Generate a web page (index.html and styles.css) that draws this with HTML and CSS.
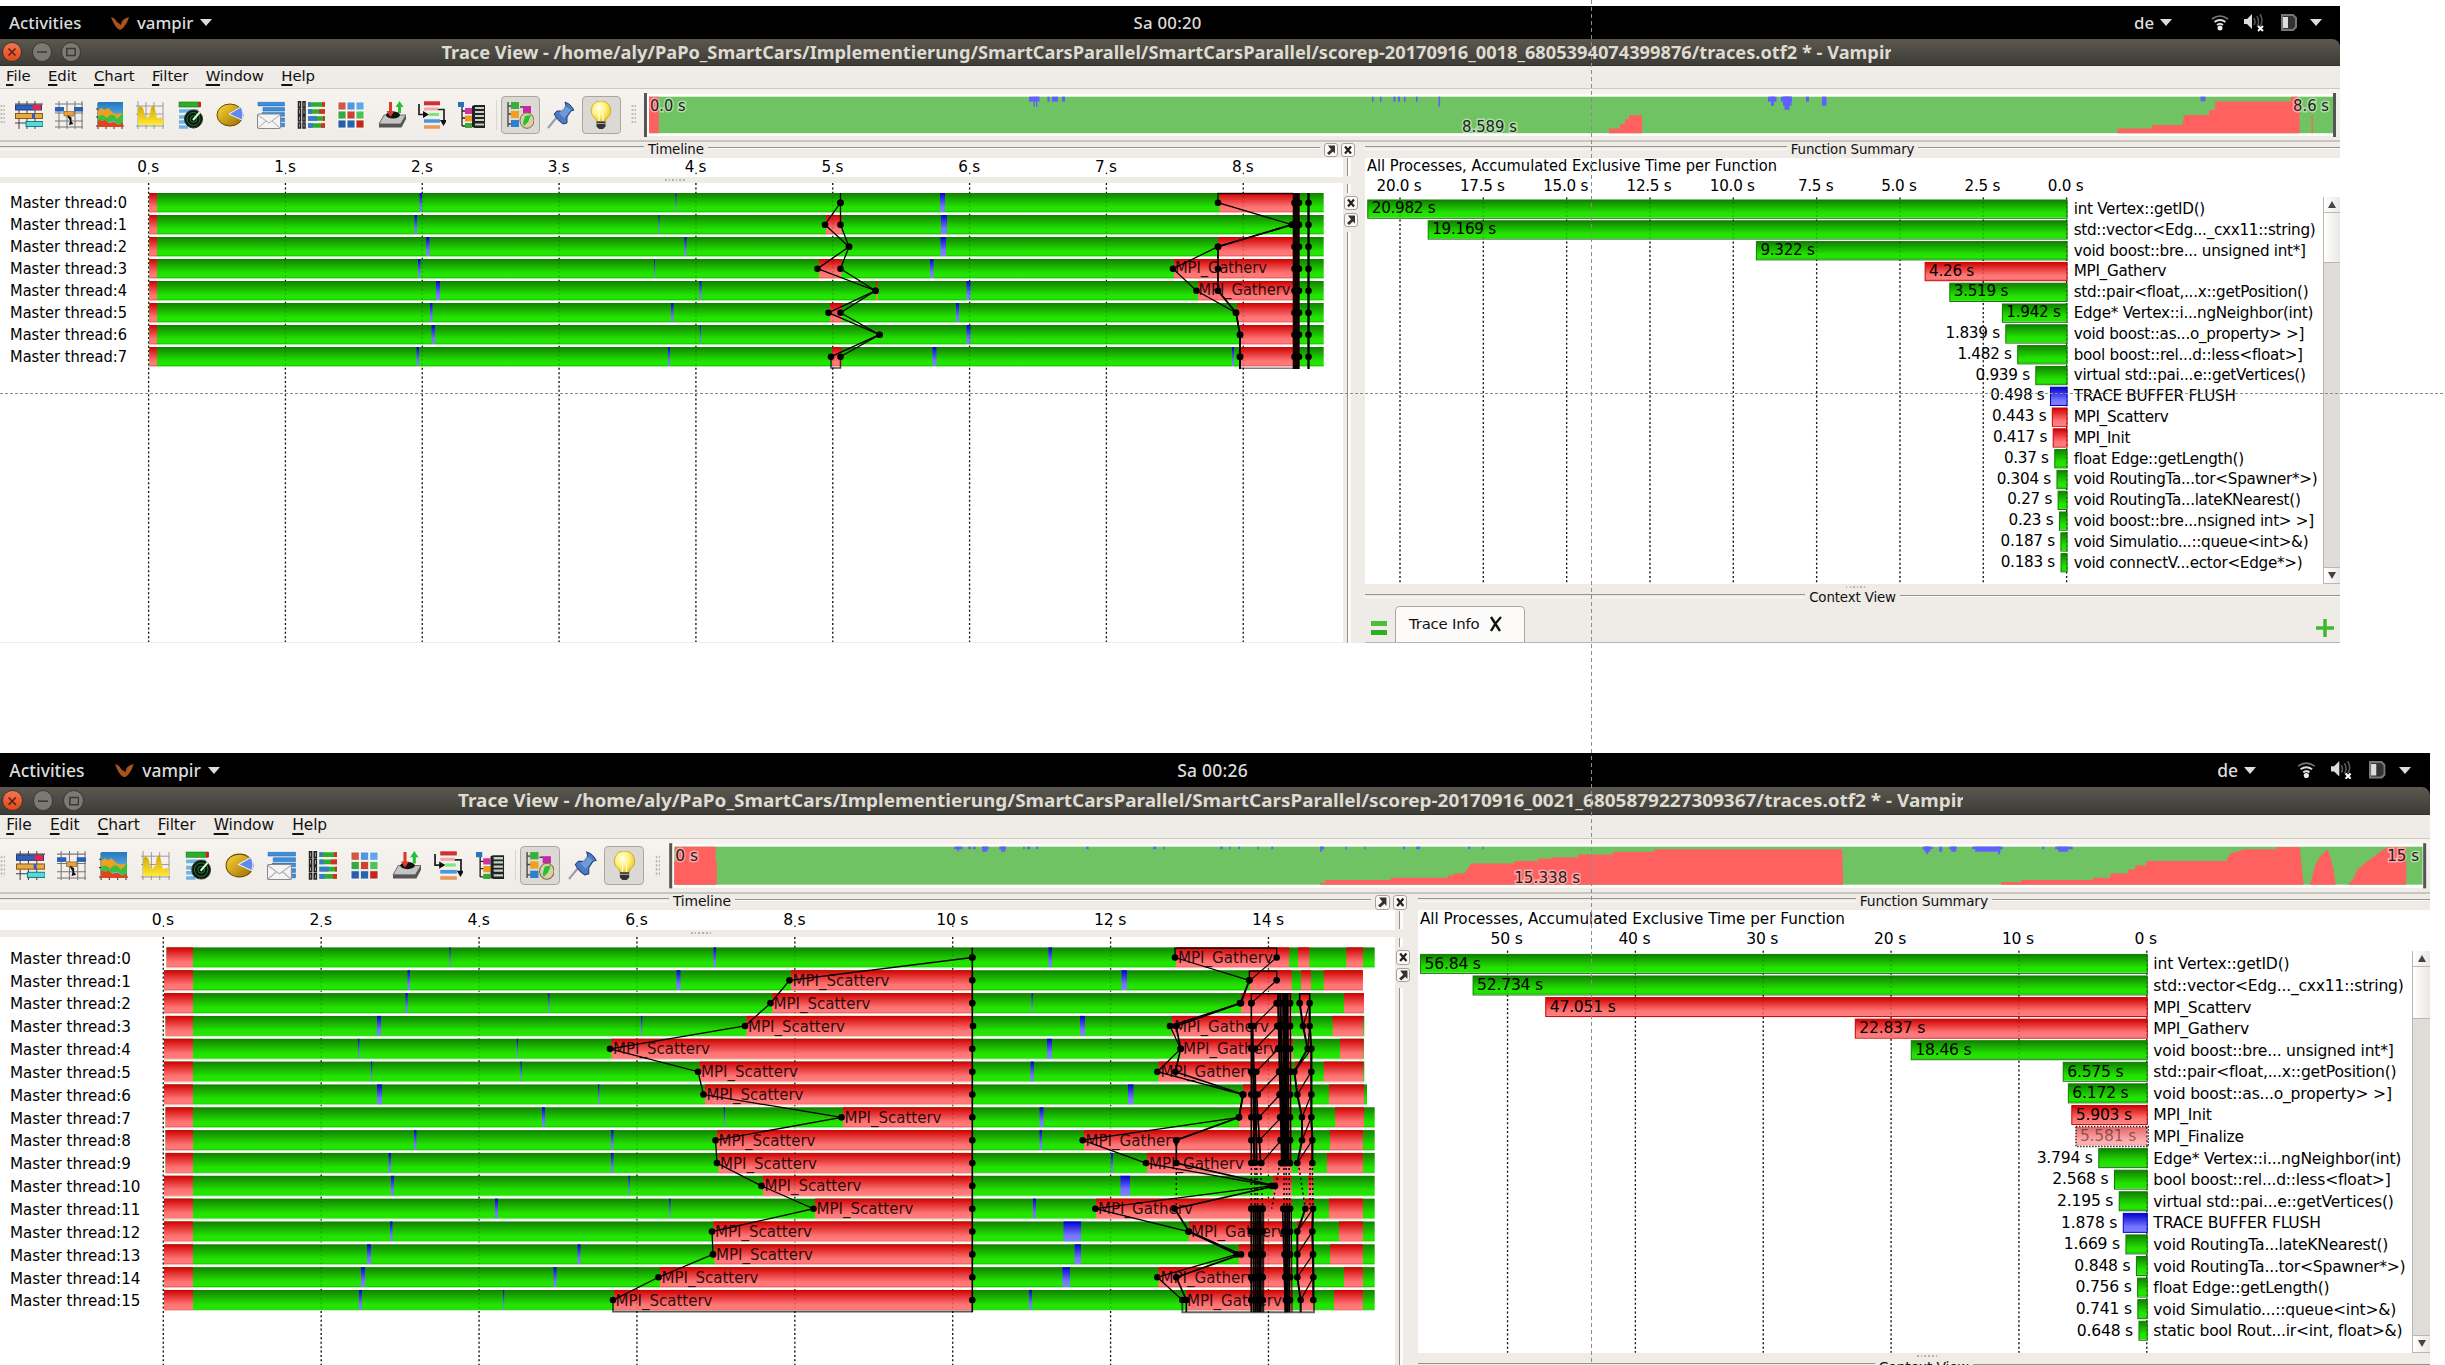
FILE: index.html
```html
<!DOCTYPE html>
<html lang="en">
<head>
<meta charset="utf-8">
<title>Trace View - Vampir</title>
<link rel="stylesheet" href="styles.css">
</head>
<body>
<svg class="defs" width="0" height="0" aria-hidden="true">
  <defs>
    <linearGradient id="g" x1="0" y1="0" x2="0" y2="1"><stop offset="0" stop-color="#118000"/><stop offset=".7" stop-color="#22e300"/><stop offset=".91" stop-color="#22e600"/><stop offset=".93" stop-color="#1cbf08"/><stop offset=".96" stop-color="#8cf080"/><stop offset="1" stop-color="#b4f5ac"/></linearGradient>
    <linearGradient id="r" x1="0" y1="0" x2="0" y2="1"><stop offset="0" stop-color="#cf0000"/><stop offset=".7" stop-color="#ff7474"/><stop offset=".91" stop-color="#ff7c7c"/><stop offset=".93" stop-color="#ef5c5c"/><stop offset=".96" stop-color="#ffb0b0"/><stop offset="1" stop-color="#ffc4c4"/></linearGradient>
    <linearGradient id="b" x1="0" y1="0" x2="0" y2="1"><stop offset="0" stop-color="#0000cf"/><stop offset=".7" stop-color="#7474ff"/><stop offset="1" stop-color="#8080ff"/></linearGradient>
    <linearGradient id="blueBar" x1="0" y1="0" x2="0" y2="1"><stop offset="0" stop-color="#7cc0f0"/><stop offset="1" stop-color="#1c5fae"/></linearGradient>
    <linearGradient id="sky" x1="0" y1="0" x2="0" y2="1"><stop offset="0" stop-color="#1f78c0"/><stop offset="1" stop-color="#8cc8f0"/></linearGradient>
    <linearGradient id="gold" x1="0" y1="0" x2="1" y2="1"><stop offset="0" stop-color="#ffd83c"/><stop offset="1" stop-color="#9a6a00"/></linearGradient>
    <linearGradient id="yel" x1="0" y1="0" x2="0" y2="1"><stop offset="0" stop-color="#d0a400"/><stop offset="1" stop-color="#ffe838"/></linearGradient>
    <radialGradient id="bulbFill" cx=".4" cy=".35" r=".7"><stop offset="0" stop-color="#fffff0"/><stop offset=".5" stop-color="#fff27a"/><stop offset="1" stop-color="#e8c020"/></radialGradient>

    <symbol id="i-timeline" viewBox="0 0 28 28"><path d="M4 0V28M12 0V28M20 0V28M0 3H28M0 13H28M0 22H28" stroke="#444" stroke-width="1"/><rect x=".5" y="4" width="26" height="5" fill="#2f5fc0" stroke="#23407c"/><rect x="18" y="4" width="8" height="5" fill="#f0204c"/><rect x=".5" y="12.500" width="27" height="5" fill="#e8a848" stroke="#8a5a10"/><rect x="17" y="12.500" width="3" height="5" fill="#2f5fc0"/><rect x="11" y="20.500" width="17" height="5" fill="#58d8dc" stroke="#148088"/></symbol>
    <symbol id="i-process" viewBox="0 0 28 28"><path d="M4 0V28M12 0V28M20 0V28M27 0V28M0 3H28M0 12H28M0 20H28M0 26H28" stroke="#777" stroke-width="1"/><rect x="0" y="6" width="9" height="4.500" fill="#2a60b8"/><rect x="19" y="6" width="9" height="4.500" fill="#2a60b8"/><rect x="9" y="10.500" width="10" height="4.500" fill="#e8a040" stroke="#8a5a10" stroke-width=".6"/><path d="M12.500 14l4 2.500v4l2 2.500-4.500 1 1-4.500-2-3z" fill="#111"/></symbol>
    <symbol id="i-area" viewBox="0 0 28 28"><path d="M2 2V28M0 25H28M0 8H3M0 16H3M10 25V28M18 25V28M26 25V28" stroke="#333"/><rect x="2" y="1" width="25" height="24" fill="url(#sky)"/><path d="M2 10l3-3 4 2 3-2 5 5 4 1 6-1v7H2z" fill="#f0a020"/><path d="M2 15l5-1 4 3 3-3 4 0 3 4 3-3 3-4v10l-4 3-5-4-5 1-5-2-6 2z" fill="#38c040"/><path d="M2 19l4 1 3-1 4 3 5-1 5 3 4-3v5H2z" fill="#e04418"/></symbol>
    <symbol id="i-counter" viewBox="0 0 28 28"><path d="M2 0V28M0 25H28M10 1V28M18 1V28M27 1V28M0 5H27M0 13H27" stroke="#888" stroke-width=".8"/><path d="M2 24V8l2-3 3 2 2 8 2 2 3-3 1-7 2-3 2 4 2 9 2 0 2-1 2 3V24z" fill="url(#yel)"/></symbol>
    <symbol id="i-radar" viewBox="0 0 28 28"><rect x="3" y="1" width="21" height="5" fill="#28b028" stroke="#186c18" stroke-width=".6"/><rect x="22" y="1" width="3" height="5" fill="#d02020"/><path d="M3 10H22M3 16H12M3 21H12M3 26H12" stroke="#6cb4e4" stroke-width="3.500"/><circle cx="17.500" cy="18" r="9" fill="#04180a" stroke="#333"/><g fill="none" stroke="#3e8a4c" stroke-width=".8"><circle cx="17.500" cy="18" r="6.500"/><circle cx="17.500" cy="18" r="3.300"/></g><path d="M17 19L24 11" stroke="#c8ffc8" stroke-width="2"/></symbol>
    <symbol id="i-pie" viewBox="0 0 28 28"><ellipse cx="14" cy="14" rx="13" ry="11" fill="url(#gold)" stroke="#6a4800"/><path d="M13 13L25 6q3 5 1 13z" fill="#5c8cf0" stroke="#eef" stroke-width="1"/></symbol>
    <symbol id="i-message" viewBox="0 0 28 28"><path d="M1 1.300h26.500v3.600H1zM6 6.500h21.500v3.600H6zM5 11.600h22.500v3.600H5zM20 17h7.500v3.600H20zM20 22.200h7.500v3.600H20z" fill="#3b8fdc" stroke="#1c5fae" stroke-width=".5"/><rect x=".5" y="13" width="23" height="14.500" rx="1" fill="#f4f4f4" stroke="#888"/><path d="M1 14l11 8 11-8M1 27l8-7M23 27l-8-7" fill="none" stroke="#aaa"/></symbol>
    <symbol id="i-comm" viewBox="0 0 28 28"><path fill="#fff" stroke="#222" stroke-width="1.500" d="M1.500.800h2v5.500h-2zM6 .800h2v5.500H6zM1.500 8h2v5.500h-2zM6 8h2v5.500H6zM1.500 15h2v5h-2zM6 15h2v5H6zM1.500 22h2v5h-2zM6 22h2v5H6z"/><path d="M11 3.500H28M11 10.500H28M11 17.500H28M11 24.500H28" stroke="#2cae2c" stroke-width="4.600"/><path d="M11 3.500h3M11 10.500h4M11 17.500h9M11 24.500h5" stroke="#3878d0" stroke-width="4.600"/><path d="M25 3.500h3M22 10.500h6M26 17.500h2M24 24.500h4" stroke="#d83020" stroke-width="4.600"/></symbol>
    <symbol id="i-matrix" viewBox="0 0 28 28"><g stroke="#fff" stroke-width=".8"><path d="M1 1h8v8H1z" fill="#d05848"/><path d="M10 1h8v8h-8z" fill="#5098d8"/><path d="M19 1h8v8h-8z" fill="#60a8e8"/><path d="M1 10h8v8H1z" fill="#38a840"/><path d="M10 10h8v8h-8z" fill="#d04030"/><path d="M19 10h8v8h-8z" fill="#50c058"/><path d="M1 19h8v8H1z" fill="#2c5ca8"/><path d="M10 19h8v8h-8z" fill="#2464b0"/><path d="M19 19h8v8h-8z" fill="#c02818"/></g></symbol>
    <symbol id="i-io" viewBox="0 0 28 28"><path d="M6 14H28L22.500 23H1z" fill="#c4c4c4" stroke="#555" stroke-width=".8"/><path d="M1 23H22.500l5.500-9v4l-4.500 8.500H1z" fill="#555"/><ellipse cx="15" cy="14" rx="7" ry="3.500" fill="#111"/><path d="M11 1v9H8.500l4 6 4-6H14V1z" fill="#d83a30"/><path d="M20 12V6h-2.500l4-6 4 6H23v6z" fill="#28c038"/></symbol>
    <symbol id="i-flow" viewBox="0 0 28 28"><path d="M6 2.300H22" stroke="#d03030" stroke-width="4"/><path d="M6 8H20" stroke="#f0a8a8" stroke-width="3"/><path d="M11 13.500H21" stroke="#78e878" stroke-width="3"/><path d="M6 20H22" stroke="#4898e0" stroke-width="3.500"/><path d="M6 26H22" stroke="#e89858" stroke-width="3.500"/><path d="M1 3V13.500H6M20 8.500H26V20" fill="none" stroke="#222" stroke-width="1.700"/><path d="M5 10l6 3.500-6 3.500zM22 19h7l-3.500 6z" fill="#111"/></symbol>
    <symbol id="i-tree" viewBox="0 0 28 28"><path d="M4 4V25M4 10h5M4 17h5M4 25h5" stroke="#222" stroke-width="1.300" fill="none"/><rect x="0" y="1" width="6" height="5" fill="#2870c0"/><rect x="7" y="7" width="7" height="6" fill="#d030a0"/><rect x="7" y="14.500" width="7" height="6" fill="#f09820"/><rect x="7" y="22" width="7" height="5" fill="#38a838"/><path d="M14 5l2.500-1H27v23H17l-3-1z" fill="#222"/><path d="M17 7H26M17 11H26M17 15H26M17 19H26M17 23.500H26" stroke="#c4d0c4" stroke-width="2.200"/></symbol>
    <symbol id="i-palette" viewBox="0 0 28 28"><path d="M2 1V26M2 5h5M2 13h5M2 23h5M14 6h4" stroke="#444" stroke-width="1.300"/><rect x="5" y="1" width="8" height="7" fill="#38b038"/><rect x="5" y="10" width="8" height="7" fill="#f0a020"/><rect x="5" y="19" width="8" height="7" fill="#2c80d0"/><rect x="17" y="5" width="8" height="7" fill="#c828a8"/><ellipse cx="21" cy="19.500" rx="7" ry="7.800" fill="#dccfa8" stroke="#776a48"/><path d="M17 22l2-7 6-1-3 7-4 4z" fill="#28c030"/></symbol>
    <symbol id="i-pin" viewBox="0 0 28 28"><path d="M1 27L10 16" stroke="#99a" stroke-width="2"/><path d="M18 1q5 1 9 8l-3 1-4 6 0 6-4 1q-6-4-9-10l3-3 6 0 3-5z" fill="#4c7cc0" stroke="#23437c"/><path d="M18 5L12 12l5 5 7-8z" fill="#89b0e4" opacity=".6"/></symbol>
    <symbol id="i-bulb" viewBox="0 0 28 28"><path d="M14 0a9.500 9.500 0 0 1 6 17l-2 4h-8l-2-4A9.500 9.500 0 0 1 14 0z" fill="url(#bulbFill)" stroke="#c8a020" stroke-width=".8"/><path d="M12 20v-8M16 20v-8" stroke="#fff" stroke-width="1"/><path d="M9.500 20.500h9v5l-2.500 2.500h-4l-2.500-2.500z" fill="#333"/><path d="M9.500 22.500h9" stroke="#aaa"/></symbol>
    <symbol id="i-vampir" viewBox="0 0 19 14"><path d="M0 1Q4 2 6 6q3 2 4 3 0-6 8-8-1 4-3 7-2 4-6 6-4-2-6-6Q1 4 0 1z" fill="#a8521c"/></symbol>
    <symbol id="i-wifi" viewBox="0 0 18 16"><g fill="none" stroke="#ddd" stroke-width="2"><path d="M1 4Q9-2 17 4" stroke="#777" stroke-width="1.600"/><path d="M3.500 7Q9 3 14.500 7"/><path d="M6 10Q9 7.500 12 10"/></g><circle cx="9" cy="13" r="2.500" fill="#eee"/></symbol>
    <symbol id="i-volume" viewBox="0 0 20 18"><path d="M0 5h3l5-5v15l-5-5H0z" fill="#ddd"/><g fill="none" stroke="#555" stroke-width="1.600"><path d="M10 4q2 4 0 7M13 2q3 6 0 10M16 0q4 7 0 12"/></g><path d="M14 12l5 5M19 12l-5 5" stroke="#fff" stroke-width="2"/></symbol>
    <symbol id="i-battery" viewBox="0 0 16 17"><path d="M1 1h11l3 3v9l-3 3H1z" fill="#333" stroke="#777" stroke-width="2"/><path d="M2 3h5v11H2z" fill="#ddd"/></symbol>
  </defs>
</svg>
<main class="page" id="page"></main>
<div class="guide guide-v"></div>
<div class="guide guide-h"></div>
<script src="app.js"></script>
</body>
</html>
```
FILE: styles.css
```css
* { box-sizing: border-box; }
body { margin: 0; background: #fff; overflow: hidden; height: 1365px; position: relative; font-family: "DejaVu Sans", sans-serif; color: #111; }
.defs { position: absolute; }
.page { display: flex; flex-direction: column; gap: 110.500px; padding-top: 6px; align-items: flex-start; height: 1365px; overflow: hidden; }
.page svg { display: block; }

.window { width: 2340px; height: 636.500px; flex: none; display: flex; flex-direction: column; background: #efebe7; font-size: 14.900px; overflow: hidden; }
.window.large { zoom: 1.0385; }

.topbar { height: 33px; flex: none; background: #000; color: #dcdcdc; display: grid; grid-template-columns: 1133.500px 1fr auto; align-items: center; font-family: "Noto Sans", sans-serif; font-size: 16.800px; font-weight: 500; padding-right: 18px; line-height: 30px; }
.topbar-left, .topbar-right { display: flex; align-items: center; }
.topbar-left { padding-left: 9px; }
.activities { width: 102px; }
.clock { letter-spacing: .25px; }
.app-icon { width: 19px; height: 14px; margin-right: 7px; }
.app-name { width: 63px; }
.caret { width: 0; height: 0; border: 6px solid transparent; border-top: 7px solid #ddd; border-bottom: 0; }
.lang { width: 26px; }
.lang + .caret { margin-right: 39px; }
.wifi { width: 18px; height: 16px; margin-right: 15px; }
.volume { width: 20px; height: 18px; margin-right: 17px; }
.battery { width: 16px; height: 17px; margin-right: 13px; }

.titlebar { height: 27px; flex: none; background: linear-gradient(#5b584f, #3d3b36); border-bottom: 1px solid #32302c; border-radius: 0 8px 0 0; display: flex; align-items: center; padding-left: 2px; }
.title-wrap { background: #000; flex: none; }
.win-btn { width: 20px; height: 20px; margin-right: 9.500px; border-radius: 50%; background: #7b7972; border: 1px solid #383631; display: flex; align-items: center; justify-content: center; }
.win-btn.close { background: linear-gradient(#f37550, #e2481c); }
.title-text { width: 1800px; height: 27px; }
.title-text text { font: 700 17.500px "Noto Sans", sans-serif; fill: #dedbd2; }

.menubar { height: 23px; flex: none; display: flex; align-items: center; gap: 17.500px; padding-left: 6px; border-bottom: 1px solid #cdc9c4; line-height: 20px; }
.menubar span { position: relative; top: -1px; letter-spacing: -.1px; }
.menubar u { text-decoration-thickness: 1.500px; text-underline-offset: 3px; }

.toolbar { height: 53px; flex: none; display: flex; align-items: center; background: linear-gradient(#f7f4f0, #efebe6); border-bottom: 2px solid #c9c5c0; }
.grip { width: 5px; height: 21px; background: radial-gradient(circle, #bdb9b4 1px, transparent 1.200px) 0 0 / 3px 4px; }
.tools { display: flex; gap: 12.300px; padding-left: 10px; align-items: center; }
.tools svg { width: 28px; height: 28px; }
.separator { width: 1px; height: 30px; margin: 0 4px 0 9.500px; background: #d8d4cf; }
.toggle { width: 39px; height: 38px; border: 1.500px solid #aaa6a1; border-radius: 4px; background: #dcd9d5; display: flex; align-items: center; justify-content: center; }
.toggle svg, .pin { width: 28px; height: 28px; }
.pin { margin: 0 7px; }
.toolbar .grip:not(:first-child) { margin: 0 8px 0 10.500px; }
.overview { width: 1693px; height: 46px; }
.overview text { fill: #222; stroke: #fff; stroke-opacity: .45; stroke-width: 3px; paint-order: stroke; }

.content { flex: 1; min-height: 0; display: grid; grid-template-columns: 1343px 22px 975px; }
.pane { display: flex; flex-direction: column; min-height: 0; min-width: 0; }
.pane-title { height: 15.500px; flex: none; display: flex; align-items: center; gap: 4px; font-size: 13.400px; letter-spacing: -.15px; line-height: 15px; white-space: nowrap; }
.pane-title::before, .pane-title .rule { content: ""; flex: 1; height: 2px; margin-top: -4px; border-top: 1px solid #96928d; border-bottom: 1px solid #fbf9f7; }
.pane-title.timeline::before { flex: none; width: 644px; }
.pane-title .mini { margin-right: 5px; }
.mini { width: 14px; height: 14px; flex: none; border: 1px solid #a5a19c; border-radius: 3px; background: #fbfaf9; }
.ruler { background: #fff; width: 1343px; height: 19px; flex: none; }
.handle { height: 6.500px; flex: none; display: flex; justify-content: center; align-items: center; }
.handle i { width: 21px; height: 2px; margin-left: 8px; background: repeating-linear-gradient(90deg, #b5b1ac 0 1.500px, transparent 1.500px 3.600px); }
.chart { background: #fff; width: 1343px; height: 459px; flex: none; }
.gutter { display: flex; flex-direction: column; align-items: flex-start; padding-left: 1px; }
.gutter > * { flex: none; }
.gutter .bar { margin-left: 3px; width: 4px; border-left: 1.500px solid #94908b; background: #fcfbfa; }
.gutter .mini.top { margin: 1px 0 1px -3px; }
.bar.b1 { height: 18px; margin-bottom: 8px; }
.bar.b2 { height: 9px; margin-bottom: 3px; }
.gutter .mini { margin-bottom: 3px; }
.bar.b3 { flex: 1; margin-top: 2px; }

.summary { display: flex; height: 426px; flex: none; background: #fff; }
.summary > svg { width: 958px; height: 426px; flex: none; }
.scroll { flex: 1; margin-top: 39px; display: flex; flex-direction: column; border-left: 1px solid #b9b5b0; background: #dfdcd8; }
.scroll div { background: linear-gradient(90deg, #fff, #ebe8e4); border-bottom: 1px solid #bbb7b2; }
.scroll .btn { height: 16px; flex: none; display: flex; align-items: center; justify-content: center; }
.scroll .thumb { height: 50px; }
.scroll .track { flex: 1; background: #e0ddd9; }
.up, .down { border: 4px solid transparent; }
.up { border-top: 0; border-bottom: 7px solid #444; }
.down { border-bottom: 0; border-top: 7px solid #444; }
.tabs { flex: 1; display: flex; align-items: flex-end; padding-left: 6px; border-bottom: 1px solid #b8b4af; }
.eq { width: 16px; height: 14px; margin-bottom: 7px; border-top: 5.500px solid #4cbc3c; border-bottom: 5.500px solid #2fae20; }
.tab { margin-left: 8px; width: 129.500px; height: 36px; background: #fcfbfa; border: 1px solid #aba7a2; border-bottom: 0; border-radius: 5px 5px 0 0; display: flex; align-items: center; padding-left: 13px; gap: 9px; font-size: 14.900px; white-space: nowrap; letter-spacing: -.2px; }
.plus { margin: 0 6px 5px auto; }

svg text { font-family: "DejaVu Sans", sans-serif; font-size: 15.200px; letter-spacing: -.28px; fill: #000; white-space: pre; }
svg text[textLength] { letter-spacing: 0; }
.large .chart text, .large .ruler text, .large .summary text, .large .overview text { font-size: 15.600px; letter-spacing: -.22px; }
.large svg text[textLength] { letter-spacing: 0 !important; }

.guide { position: absolute; pointer-events: none; }
.guide-v { left: 1591px; top: 0; width: 1px; height: 1365px; background: repeating-linear-gradient(#8c8c8c 0 4px, transparent 4px 7px); }
.guide-h { left: 0; top: 393px; width: 2445px; height: 1px; background: repeating-linear-gradient(90deg, #8c8c8c 0 3px, transparent 3px 5px); }
```
FILE: app.js
```js
const rect = (x, y, w, h, fill, extra = "") => `<rect x="${x}" y="${y}" width="${w}" height="${h}" fill="${fill}" ${extra}/>`;
const esc = s => s.replace(/&/g, "&amp;").replace(/</g, "&lt;").replace(/>/g, "&gt;");
const text = (x, y, s, extra = "") => `<text x="${x}" y="${y}" ${extra} lengthAdjust="spacingAndGlyphs">${esc(s)}</text>`;
const use = (id, cls = "") => `<svg class="${cls}"><use href="#${id}"/></svg>`;
const dot = (x, y, r = 3.3) => `<circle cx="${x}" cy="${y}" r="${r}"/>`;
const line = (pts, w = 1.3, extra = "") => `<polyline points="${pts.map(p => p.join(",")).join(" ")}" fill="none" stroke="#000" stroke-width="${w}" ${extra}/>`;
const GREEN = "url(#g)", RED = "url(#r)", BLUE = "url(#b)";
const DASH = 'stroke-dasharray="2 3"';

/* x positions of an event per row; null leaves a gap */
const track = (xs, cy, w) => {
  let out = "", run = [];
  xs.forEach((x, i) => {
    if (x === null) { if (run.length > 1) out += line(run, w); run = []; return; }
    run.push([x, cy(i)]); out += dot(x, cy(i));
  });
  return out + (run.length > 1 ? line(run, w) : "");
};

/* ---------- first run: 8 threads ---------- */
const small = {
  cls: "", clock: "Sa 00:20",
  title: "Trace View - /home/aly/PaPo_SmartCars/Implementierung/SmartCarsParallel/SmartCarsParallel/scorep-20170916_0018_6805394074399876/traces.otf2 * - Vampir",
  oBox: "643 93 1693 46", rBox: "0 157.5 1343 19", cBox: "0 183 1343 459", sBox: "1365 157.5 958 426",
  labelLen: 117, gatherLen: 92, scatterLen: 94, lift: 1,
  ticks: [...Array(9)].map((_, i) => [148.6 + 136.83 * i, i + " s"]), tickBase: 171.2, chartTop: 183, chartEnd: 642,
  top: 193, pitch: 22, barH: 20, left: 149.3,
  rows: [
    { red: [[149.3, 157], [1219.5, 1299.5]], blue: [[419.5, 422], [675.5, 676.5], [940, 945]] },
    { red: [[149.3, 157], [826, 842]], blue: [[414.5, 417], [658.5, 659.5], [941, 947]] },
    { red: [[149.3, 157], [1218, 1299]], blue: [[426, 429.5], [684.5, 686.5], [940.5, 946]] },
    { red: [[149.3, 157], [819, 841.5], [1174, 1299]], blue: [[418, 420.5], [654, 655], [930, 933.5]], label: [[1175, "MPI_Gatherv"]] },
    { red: [[149.3, 157], [876, 877.5], [1198, 1299]], blue: [[436, 440], [699.5, 701.5], [966.5, 970.5]], label: [[1198.5, "MPI_Gatherv"]] },
    { red: [[149.3, 157], [830, 842], [1237, 1299]], blue: [[430, 432.5], [671, 673.5], [956, 959]] },
    { red: [[149.3, 157], [1240, 1299]], blue: [[431.5, 435], [699.8, 701], [966.5, 970.5]] },
    { red: [[149.3, 157], [832, 841.5], [1240, 1299]], blue: [[416.5, 419], [668, 670], [932.5, 936.5], [1232, 1234]] }
  ].map(r => ({ end: 1323.7, ...r })),
  events() {
    const cy = i => 202.7 + 22 * i;
    let o = rect(1292.7, 193, 7, 176, "#140000") + line([[1308.5, 193], [1308.5, 369]], 2.4);
    for (let i = 0; i < 8; i++) o += dot(1294.5, cy(i)) + dot(1299, cy(i)) + dot(1308.5, cy(i));
    o += track([840.5, 825, 849, 817.5, 875.5, 828.5, 879.5, 831], cy);
    o += track([840.5, 840.5, 849, 840.5, 875.5, 840.5, 879.5, 840.5], cy);
    o += line([[840.5, 193], [840.5, 203]]) + line([[831, 357], [831, 368], [840.5, 368], [840.5, 357]], 1.6, 'stroke-opacity=".7"');
    o += track([1218, 1292, 1218, 1173, 1196.5, 1236, 1240, 1240], cy);
    o += track([null, 1292, 1218, 1218, 1218, 1236, 1240, 1240], cy, 1.8);
    o += line([[1218, 203], [1218, 193.5], [1293, 193.5]], 1.5, 'stroke-opacity=".8"') + line([[1240, 357], [1240, 369]], 2) + line([[1240, 368.3], [1293, 368.3]], 1.6, 'stroke-opacity=".5"');
    return o;
  },
  overview() {
    const y = 97.7, b = 134.2;
    let o = rect(646, 95, 1687, 42, "#fff") + rect(648, y, 1684, b - y, "#70c362") + rect(648, y, 9.7, b - y, "#ff6060");
    for (const [x, w, h] of [[1028, 10.5, 5], [1032.5, 1.3, 10], [1035, 1.3, 10], [1046.5, 2, 5], [1051, 6, 5], [1061, 3, 5], [1371, 1.5, 5], [1379, 1.5, 5], [1392.5, 2, 5], [1397, 2, 5], [1403, 1.5, 5], [1415, 1.5, 5], [1437.5, 1.6, 10], [1767, 8.5, 5], [1770, 3, 9], [1780, 11, 5], [1782, 8.5, 9], [1783.5, 5, 13], [1805, 3, 5], [1821, 4.5, 9], [2199.5, 5, 4.5]]) o += rect(x, y, w, h, "#6060ff");
    o += `<path fill="#ff6060" d="M1608 ${b}V129.500H1619V125H1624V120H1628V116.300H1641V${b}zM2116.500 ${b}V129.500H2151V126H2181.500V121H2182.700V116H2208V111H2214V102.500H2290V${y}H2297V103H2298.500V${b}zM2310.500 ${b}V116H2311.800V${b}z"/>`;
    o += rect(643, 94, 3, 44, "#555") + rect(2332, 94, 3, 44, "#555");
    return o + text(649, 112, "0.0 s", 'textLength="35.500"') + text(1461, 133, "8.589 s", 'textLength="55"') + text(2292, 112, "8.6 s", 'textLength="36"');
  },
  sum: {
    zero: 2066.6, scale: 33.33, header: [1367, 170.7, 410], axisY: 190.3, top: 199, pitch: 20.8, h: 19.3, labelX: 2073.7, gridTop: 197, gridEnd: 583, lift: .7,
    axis: [20, 17.5, 15, 12.5, 10, 7.5, 5, 2.5, 0].map(v => [v, v.toFixed(1) + " s"]),
    items: [["20.982", "int Vertex::getID()"], ["19.169", "std::vector<Edg..._cxx11::string)"], ["9.322", "void boost::bre... unsigned int*]"], ["4.26", "MPI_Gatherv", RED], ["3.519", "std::pair<float,...x::getPosition()"], ["1.942", "Edge* Vertex::i...ngNeighbor(int)"], ["1.839", "void boost::as...o_property> >]"], ["1.482", "bool boost::rel...d::less<float>]"], ["0.939", "virtual std::pai...e::getVertices()"], ["0.498", "TRACE BUFFER FLUSH", BLUE], ["0.443", "MPI_Scatterv", RED], ["0.417", "MPI_Init", RED], ["0.37", "float Edge::getLength()"], ["0.304", "void RoutingTa...tor<Spawner*>)"], ["0.27", "void RoutingTa...lateKNearest()"], ["0.23", "void boost::bre...nsigned int> >]"], ["0.187", "void Simulatio...::queue<int>&)"], ["0.183", "void connectV...ector<Edge*>)"]]
  }
};

/* ---------- second run: 16 threads ---------- */
const S = [null, 791, 772, 746.5, 611.5, 699.5, 705, 843, 717, 718.5, 763, 815, 713.5, 714.5, 660, 614];
const initStart = [166.5, 164, 164, 165.5, 164, 164, 164, 165.5, 165.5, 165.5, 164, 164, 164, 164, 164, 164];
const late = [
  [[1176, 1289.3], [1298, 1309.3], [1346.3, 1363]], [[1250, 1291.7], [1301, 1311], [1323.7, 1363]],
  [[1241, 1291.7], [1299.3, 1310], [1344, 1364]], [[1171.7, 1292], [1303, 1310], [1332.7, 1363.3]],
  [[1180, 1293], [1308, 1311.5], [1340, 1363.5]], [[1158.5, 1291.7], [1295, 1312], [1323.7, 1363.3]],
  [[1243, 1291.7], [1298, 1312], [1329, 1364]], [[1239, 1291.7], [1302, 1312], [1335, 1364]],
  [[1084, 1291.7], [1302, 1313], [1330, 1363]], [[1147, 1291.7], [1298, 1313], [1327, 1363]],
  [[1273, 1291.7], [1308, 1313]], [[1096, 1291.7], [1305, 1314], [1329, 1363]],
  [[1189, 1291.7], [1297, 1313], [1339, 1363]], [[1238.7, 1292], [1298, 1313], [1330, 1363]],
  [[1158.5, 1292], [1298, 1314], [1344, 1363]], [[1186, 1292.7], [1301, 1314], [1334, 1363]]
];
const flush = [
  [[449.5, 450.7], [713.5, 716], [1048.5, 1052]], [[407.5, 410], [676.5, 680.5], [1121.5, 1127]],
  [[405.5, 407.7], [548.2, 549.5], [1031.500, 1032.8]], [[377, 381], [641, 642.3], [1080, 1085]],
  [[358, 359.3], [516.8, 518], [1047, 1052]], [[371, 372.2], [520.5, 521.8], [1030.5, 1034]],
  [[377, 382], [598, 599.3], [1128, 1133.5]], [[542, 545], [723.8, 725], [1039.5, 1043.5]],
  [[414, 416.5], [611, 613.5], [1039.5, 1042]], [[388.5, 391], [611, 613.5], [1111, 1113]],
  [[391, 394], [628.5, 629.8], [1120.5, 1130]], [[495, 498], [669.2, 670.5], [1033, 1036]],
  [[390, 392.5], [1063.5, 1081]], [[367, 371], [577.5, 580.5], [1074.5, 1081]],
  [[361, 365], [553.5, 556.5], [1062.5, 1070]], [[359, 362], [503, 504.2], [1029, 1032]]
];
const gatherLabel = { 0: 1178, 3: 1174, 4: 1183, 5: 1160.500, 8: 1085.500, 9: 1149, 11: 1098, 12: 1191, 14: 1160.500, 15: 1187 };
const ends = [1374.7, 1363, 1364, 1364.3, 1364, 1364.3, 1367];

const large = {
  cls: "large", clock: "Sa 00:26",
  title: "Trace View - /home/aly/PaPo_SmartCars/Implementierung/SmartCarsParallel/SmartCarsParallel/scorep-20170916_0021_6805879227309367/traces.otf2 * - Vampir",
  oBox: "667.8 843.3 1758.2 47.8", rBox: "0 910.3 1394.7 19.7", cBox: "0 936.8 1394.7 476.7", sBox: "1417.6 910.3 994.9 442.4",
  labelLen: 121, gatherLen: 95, scatterLen: 97, lift: 0,
  ticks: [...Array(8)].map((_, i) => [163.3 + 157.88 * i, 2 * i + " s"]), tickBase: 924.8, chartTop: 936.8, chartEnd: 1413,
  top: 947.2, pitch: 22.84, barH: 20.8, left: 164,
  rows: late.map((l, i) => ({
    start: initStart[i], end: ends[i] || 1374.7,
    red: [[initStart[i], 193], ...(S[i] ? [[S[i], 972.4]] : []), ...l], blue: flush[i],
    label: [...(S[i] ? [[S[i] + 1.5, "MPI_Scatterv"]] : []), ...(gatherLabel[i] ? [[gatherLabel[i], "MPI_Gatherv"]] : [])]
  })),
  events() {
    const cy = i => 957.3 + 22.84 * i;
    const X = a => a.map(v => v === null ? null : 1140 + v / 3);
    const bottom = 1312;
    let o = track([972.3, 789.5, 770.5, 745, 610, 698, 703.5, 841.5, 715.5, 717, 761.5, 813.5, 712, 713, 658.5, 613], cy);
    o += line([[613, cy(15)], [613, 1311.500], [972.3, 1311.500]], 1.8, 'stroke-opacity=".65"') + line([[972.3, 947.5], [972.3, bottom]], 1.6);
    for (let i = 0; i < 16; i++) o += dot(i === 3 ? 973 : 972.3, cy(i));
    const A = X([105, 328, 300, 90, 122, 52, 308, 297, -172, 18, 395, -134, 145, 290, 52, 127]);
    const B = X([null, 328, 303, 108, 122, 106, 310, 297, 109, 109, 405, 104, 147, 303, 109, 139]);
    o += track(A, cy) + track(B, cy, 1.7);
    o += line([[A[0], cy(0)], [A[0], 948], [1276.7, 948], [1276.7, cy(0)]], 1.3);
    o += line([[B[1], cy(1)], [B[1], 971], [1276.7, 971], [1276.7, cy(1)]], 1.3);
    o += line([[1176.3, cy(9)], [1176.3, cy(11)]], 1.3, DASH);
    o += line([[A[15], cy(15)], [A[15], bottom], [1314, bottom], [1314, cy(15)]], 2, 'stroke-opacity=".6"') + line([[B[15], cy(15)], [B[15], bottom]], 1.6);
    /* staircase of collective rounds */
    const from = X([410, 410, 410, 412, 415, 420, 420, 424, 424]);
    const to = X([330, 334, 340, 345, 349, 353, 357, 358, 364]);
    from.forEach((x, i) => { o += dot(x, cy(i)) + line([[x, cy(i)], [to[i], cy(i + 1)]], 1.2); if (i) o += dot(to[i], cy(i + 1)); });
    o += track(X([null, null, 334, 334, 334, 334, 334, 334, 334, 334]), cy, 1.6);
    for (const [x, a, top, w] of [[338, 343, 3, 1.8], [340, 343, 4, 2], [345, 350, 5, 2], [350, 362, 6, 1.5], [354, 362, 7, 1.3]])
      o += line(X([x, a]).map((v, k) => [v, k ? cy(9) : cy(top)]), w) + dot(X([a])[0], cy(9), 2.8);
    for (const [x0, x1, w] of [[414, 426, 2.2], [421, 430, 2.2], [430, 434, 2.6], [437, 440, 3], [443, 446, 1.8], [451, 452, 1.5]])
      o += line([[1140 + x0 / 3, 970 + 22.8], [1140 + x1 / 3, cy(9)]], w);
    for (let i = 2; i < 10; i++) for (const x of [413 + (i - 2) * 1.5, 424 + (i - 2), 434 + (i - 2) * .5, 450]) o += dot(1140 + x / 3, cy(i), 3.4);
    for (const [a, b] of [[334, 334], [345, 345], [350, 353], [361, 368], [420, 395], [432, 432], [438, 441], [447, 449], [475, 496], [510, 510], [517, 519]])
      o += line([[1140 + a / 3, cy(9)], [1140 + b / 3, cy(11)]], 1.5, DASH);
    for (const [x, w] of [[334, 1.8], [341, 2], [347, 2], [353, 2.4], [360, 2], [366, 1.6], [371, 1]])
      o += line([[1140 + x / 3, cy(11)], [1140 + x / 3, bottom]], w);
    for (const [x0, x1, w] of [[428, 436, 1.6], [436, 438, 2.6], [443, 443, 2.4], [449, 449, 1.5], [454, 456, 1]])
      o += line([[1140 + x0 / 3, cy(11)], [1140 + x1 / 3, bottom]], w);
    for (let i = 11; i < 16; i++) for (const x of [334, 344, 352, 360, 368, 430 + (i - 11) * 2, 441, 450]) o += dot(1140 + x / 3, cy(i), 3.4);
    const D = X([null, null, 479, 489, 503, 463, 472, 486, 486, 472, null, 496, 472, 472, 472, 482]);
    const R = X([null, null, 509, 509, 514, 514, 514, 514, 517, 517, null, 519, 517, 519, 520, 520]);
    o += track(D, cy, 2) + track(R, cy, 2.2);
    for (let i = 2; i < 15; i++) if (R[i] && D[i + 1]) o += line([[R[i], cy(i)], [D[i + 1], cy(i + 1)]], 1.2);
    o += line([[D[2], cy(2)], [D[2], 993.5], [R[2], 993.5], [R[2], cy(2)]], 1.6) + line([[D[15], cy(15)], [D[15], bottom]], 2);
    o += line([[1251.300, cy(2)], [1251.300, 993.5], [1291, 993.5]], 1.2);
    return o;
  },
  overview() {
    const y = 848, b = 886;
    let o = rect(671, 845.5, 1751, 43.5, "#fff") + rect(673, y, 1748.400, b - y, "#70c362") + rect(674, y, 40.500, b - y, "#ff6060") + rect(673, 863, 42.5, 23, "#ff6060");
    for (const [x, w, h] of [[953, 8.4, 2.5], [956, 2, 4.5], [967, 3, 2.5], [972, 2.5, 2.5], [981, 6.5, 2.5], [981, 5, 5], [998, 7, 2.5], [1000, 4, 5], [1022, 1.5, 2.5], [1026, 3, 2.5], [1035, 2, 2.5], [1085, 2.5, 2.5], [1152, 3, 2.5], [1162, 1.5, 2.5], [1219, 2.5, 2.5], [1228, 1.5, 2.5], [1237, 2, 2.5], [1256, 1.5, 2.5], [1270, 2, 2.5], [1319, 4, 2.5], [1319, 2, 5], [1344, 1.500, 2.500], [1363, 1.5, 2.5], [1402, 2, 2.5], [1415, 4, 2.5], [1467, 2, 2.5], [1481, 1.5, 2.5], [1921.5, 10, 2.500], [1923, 6, 5], [1925, 2, 7.5], [1938, 3, 5], [1948, 7.5, 2.500], [1950, 5, 5], [1971, 30.6, 2.500], [1974, 25, 5], [1997, 2, 7.5], [2041, 2, 2.5], [2054, 17.6, 2.500], [2057, 10, 5]]) o += rect(x, y, w, h, "#6060ff");
    o += `<path fill="#ff6060" d="M1319 ${b}V884H1324V881.400H1389.700V879H1446.600V876.700H1452.700V874.700H1463L1466 870.700L1470 864.800H1513V862.400H1537V859.700H1551V858.500H1577V855.700H1612V853H1653V850.600H1841L1842 ${b}zM2000 ${b}V883.400H2020V881.400H2092V879H2109V874.700H2127V870.700H2134V866.800H2145V862.400H2226V859.700L2229 855L2243 850.600H2275.400V848.200H2298.500L2302.500 ${b}zM2308.700 ${b}L2314 866.800L2319 857.700L2326 850.600L2329 857.700L2332.500 871.500L2334.500 ${b}zM2346.700 ${b}L2351.500 881.400L2356 870.700L2365 863.600L2373 857.700L2382 850.600L2389 848.200H2405V${b}z"/>`;
    o += rect(668, 844.5, 3, 45.2, "#555") + rect(2422, 844.5, 3, 45.2, "#555");
    return o + text(674, 862.8, "0 s", 'textLength="23"') + text(1513, 884.5, "15.338 s", 'textLength="66"') + text(2386, 862.8, "15 s", 'textLength="32"');
  },
  sum: {
    zero: 2146.4, scale: 12.785, header: [1419.5, 924.6, 425], axisY: 944.8, top: 954.2, pitch: 21.58, h: 20, labelX: 2153, gridTop: 951, gridEnd: 1353, lift: 0,
    axis: [50, 40, 30, 20, 10, 0].map(v => [v, v + " s"]),
    items: [["56.84", "int Vertex::getID()"], ["52.734", "std::vector<Edg..._cxx11::string)"], ["47.051", "MPI_Scatterv", RED], ["22.837", "MPI_Gatherv", RED], ["18.46", "void boost::bre... unsigned int*]"], ["6.575", "std::pair<float,...x::getPosition()"], ["6.172", "void boost::as...o_property> >]"], ["5.903", "MPI_Init", RED], ["5.581", "MPI_Finalize", RED, true], ["3.794", "Edge* Vertex::i...ngNeighbor(int)"], ["2.568", "bool boost::rel...d::less<float>]"], ["2.195", "virtual std::pai...e::getVertices()"], ["1.878", "TRACE BUFFER FLUSH", BLUE], ["1.669", "void RoutingTa...lateKNearest()"], ["0.848", "void RoutingTa...tor<Spawner*>)"], ["0.756", "float Edge::getLength()"], ["0.741", "void Simulatio...::queue<int>&)"], ["0.648", "static bool Rout...ir<int, float>&)"]]
  }
};

function timeline(c) {
  const grid = o => c.ticks.map(([x]) => line([[x, c.chartTop], [x, c.chartEnd]], 1.3, `stroke-dasharray="2 2.400" stroke-opacity="${o}"`)).join("");
  let o = grid(.9), labels = "";
  c.rows.forEach((r, i) => {
    const y = c.top + c.pitch * i, x0 = r.start || c.left, mid = y + c.barH / 2 - c.lift;
    o += rect(x0, y, r.end - x0, c.barH, GREEN);
    for (const [a, b] of r.red) o += rect(a, y, b - a, c.barH, RED);
    for (const [a, b] of r.blue) o += rect(a, y, b - a, c.barH - 1, BLUE);
    for (const [x, s] of r.label || []) labels += text(x, mid + 5.3, s, `textLength="${s === "MPI_Gatherv" ? c.gatherLen : c.scatterLen}" fill-opacity=".85"`);
    o += text(10, mid + 6, "Master thread:" + i, i < 10 ? `textLength="${c.labelLen}"` : `textLength="${c.labelLen + 9.500}"`);
  });
  return o + grid(.18) + labels + c.events();
}

function summary(s) {
  const grid = o => s.axis.map(([v]) => { const x = s.zero - v * s.scale; return line([[x, s.gridTop], [x, s.gridEnd]], 1.3, `stroke-dasharray="2 2.400" stroke-opacity="${o}"`); }).join("");
  let o = text(s.header[0], s.header[1], "All Processes, Accumulated Exclusive Time per Function", `textLength="${s.header[2]}"`);
  for (const [v, l] of s.axis) o += text(s.zero - v * s.scale - 1, s.axisY, l, 'text-anchor="middle"');
  o += grid(.9);
  let labels = "";
  s.items.forEach(([v, name, fill = GREEN, faded], i) => {
    const w = v * s.scale, x = s.zero - w, y = s.top + s.pitch * i;
    const edge = fill === GREEN ? "#0f7d00" : fill === RED ? "#cc0000" : "#0000c8";
    o += rect(x + .5, y + .5, w, s.h - 1, fill, faded ? 'opacity=".6"' : `stroke="${edge}"`);
    if (faded) o += rect(x + .5, y, w + 1, s.h, "none", 'stroke="#222" stroke-width="1.4" stroke-dasharray="1.500 1.500"');
    const inside = w > 64;
    labels += text(inside ? x + 4.5 : x - 5.5, y + s.h / 2 + 4.8 - s.lift, v + " s", `text-anchor="${inside ? "start" : "end"}" ${faded ? 'fill-opacity=".45"' : ""}`);
    labels += text(s.labelX, y + s.h / 2 + 5.5 - s.lift, name);
  });
  return o + grid(.2) + labels;
}

const closeMini = cls => `<svg class="mini ${cls || ""}" viewBox="0 0 11 12"><path d="M2.500 2.500l6 7M8.500 2.500l-6 7" stroke="#222" stroke-width="2.200"/></svg>`;
const undockMini = '<svg class="mini" viewBox="0 0 11 12"><path d="M2.500 1.500h7v8l-2-2L3.500 11 1.500 9l4-3.500z" fill="#333"/></svg>';

function buildWindow(c) {
  const menu = ["File", "Edit", "Chart", "Filter", "Window", "Help"].map(m => `<span><u>${m[0]}</u>${m.slice(1)}</span>`).join("");
  const tools = ["timeline", "process", "area", "counter", "radar", "pie", "message", "comm", "matrix", "io", "flow", "tree"].map(t => use("i-" + t)).join("");
  return `<section class="window ${c.cls}">
    <header class="topbar">
      <div class="topbar-left"><span class="activities">Activities</span>${use("i-vampir", "app-icon")}<span class="app-name">vampir</span><i class="caret"></i></div>
      <div class="clock">${c.clock}</div>
      <div class="topbar-right"><span class="lang">de</span><i class="caret"></i>${use("i-wifi", "wifi")}${use("i-volume", "volume")}${use("i-battery", "battery")}<i class="caret"></i></div>
    </header>
    <div class="title-wrap"><div class="titlebar">
      <span class="win-btn close"><svg width="10" height="10"><path d="M1.500 1.500l7 7M8.500 1.500l-7 7" stroke="#5a2010" stroke-width="1.500"/></svg></span>
      <span class="win-btn"><svg width="10" height="10"><path d="M0 5h10" stroke="#3b3935" stroke-width="1.500"/></svg></span>
      <span class="win-btn"><svg width="10" height="10"><path d="M.8 1.500h8.400v7H.8z" fill="none" stroke="#3b3935" stroke-width="1.500"/></svg></span>
      <svg class="title-text">${text(350.5, 19.5, c.title, 'textLength="1451"')}</svg>
    </div></div>
    <nav class="menubar">${menu}</nav>
    <div class="toolbar">
      <i class="grip"></i><div class="tools">${tools}</div><i class="separator"></i>
      <span class="toggle">${use("i-palette")}</span>${use("i-pin", "pin")}<span class="toggle">${use("i-bulb")}</span>
      <i class="grip"></i><svg class="overview" viewBox="${c.oBox}" preserveAspectRatio="none">${c.overview()}</svg>
    </div>
    <div class="content">
      <div class="pane">
        <div class="pane-title timeline">Timeline<i class="rule"></i>${undockMini}</div>
        <svg class="ruler" viewBox="${c.rBox}" preserveAspectRatio="none">${c.ticks.map(([x, l]) => text(x - .5, c.tickBase, l, 'text-anchor="middle"') + rect(x - .5, c.tickBase + 1, 1.3, 1.5, "#222")).join("")}</svg>
        <div class="handle"><i></i></div>
        <svg class="chart" viewBox="${c.cBox}" preserveAspectRatio="none">${timeline(c)}</svg>
      </div>
      <div class="gutter">${closeMini("top")}<i class="bar b1"></i><i class="bar b2"></i>${closeMini()}${undockMini}<i class="bar b3"></i></div>
      <div class="pane">
        <div class="pane-title">Function Summary<i class="rule"></i></div>
        <div class="summary"><svg viewBox="${c.sBox}" preserveAspectRatio="none">${summary(c.sum)}</svg>
          <div class="scroll"><div class="btn"><i class="up"></i></div><div class="thumb"></div><div class="track"></div><div class="btn"><i class="down"></i></div></div></div>
        <div class="handle"><i></i></div>
        <div class="pane-title">Context View<i class="rule"></i></div>
        <div class="tabs"><i class="eq"></i><div class="tab">Trace Info<svg width="15" height="16"><path d="M3 1l9 14M13 1Q7 7 3 15" stroke="#111" stroke-width="2.400" fill="none"/></svg></div>
          <svg class="plus" width="18" height="18"><path d="M9 0v18M0 9h18" stroke="#42b832" stroke-width="3.500"/></svg></div>
      </div>
    </div>
  </section>`;
}

document.getElementById("page").innerHTML = buildWindow(small) + buildWindow(large);
```
